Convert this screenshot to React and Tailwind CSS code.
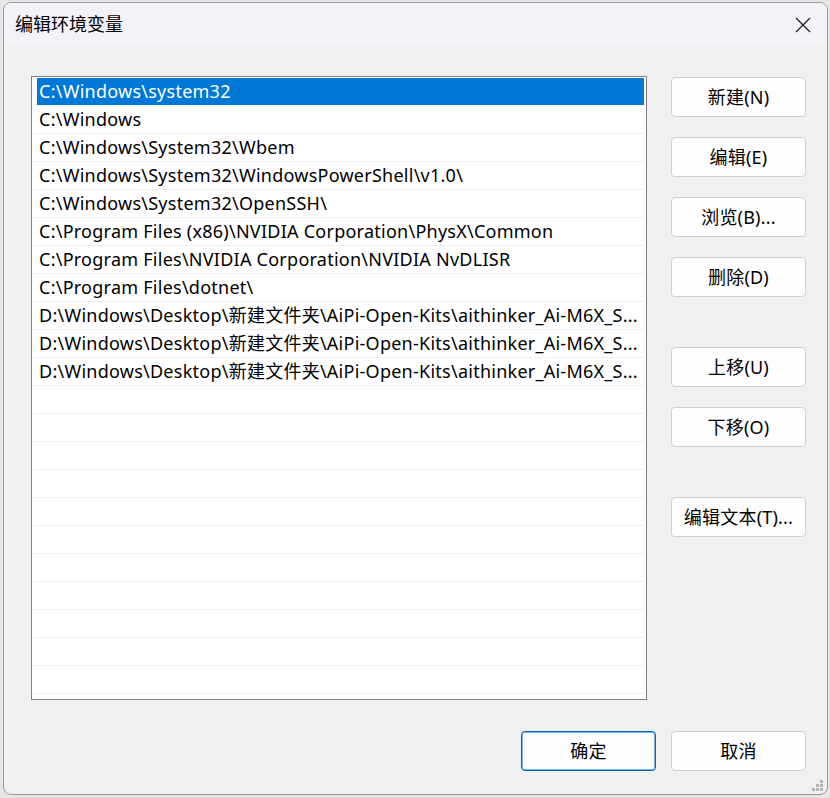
import React from "react";

const FONT = { fontFamily: '"Noto Sans", "Noto Sans CJK SC", sans-serif' };

const rows = [
  "C:\\Windows\\system32",
  "C:\\Windows",
  "C:\\Windows\\System32\\Wbem",
  "C:\\Windows\\System32\\WindowsPowerShell\\v1.0\\",
  "C:\\Windows\\System32\\OpenSSH\\",
  "C:\\Program Files (x86)\\NVIDIA Corporation\\PhysX\\Common",
  "C:\\Program Files\\NVIDIA Corporation\\NVIDIA NvDLISR",
  "C:\\Program Files\\dotnet\\",
  "D:\\Windows\\Desktop\\新建文件夹\\AiPi-Open-Kits\\aithinker_Ai-M6X_S...",
  "D:\\Windows\\Desktop\\新建文件夹\\AiPi-Open-Kits\\aithinker_Ai-M6X_S...",
  "D:\\Windows\\Desktop\\新建文件夹\\AiPi-Open-Kits\\aithinker_Ai-M6X_S...",
];

function Btn({ children, primary, className = "" }) {
  return (
    <div
      className={
        "w-[135px] h-[40px] rounded-[4px] bg-[#fdfdfd] flex items-center justify-center text-[18px] tracking-[0.2px] text-black " +
        (primary ? "border border-[#0067c0] shadow-[inset_0_0_0_0.5px_#0067c0] " : "border border-[#d0d0d0] ") +
        className
      }
    >
      {children}
    </div>
  );
}

export default function App() {
  const all = [...rows];
  while (all.length < 23) all.push("");
  return (
    <div className="w-[830px] h-[798px] bg-[#e6e6e6] pl-[3px] pt-[2px] overflow-hidden relative" style={FONT}>
      <div className="w-[825px] h-[793px] rounded-[8px] border border-[#9c9c9c] bg-[#f0f0f0] overflow-hidden flex flex-col relative">
        <div className="h-[43px] shrink-0 bg-[#f3f2f7] flex items-center justify-between pl-[11px] pr-[16px]">
          <span className="text-[18px] text-black">编辑环境变量</span>
          <svg width="16" height="16" viewBox="0 0 16 16">
            <path d="M1 1 L15 15 M15 1 L1 15" stroke="#1a1a1a" strokeWidth="1.2" fill="none" />
          </svg>
        </div>
        <div className="flex-1 flex flex-col pl-[27px] pt-[30px]">
          <div className="flex gap-[24px]">
            <div className="w-[616px] h-[624px] border border-[#7f7f87] bg-white pl-[1px] pt-[1px] overflow-hidden">
              {all.map((r, i) =>
                i === 0 ? (
                  <div key={i} className="w-[611px] h-[28px] flex">
                    <div className="ml-[4px] flex-1 h-[27px] bg-[#0078d7] text-white text-[18px] tracking-[0.25px] flex items-center pl-[2px] whitespace-nowrap overflow-hidden">
                      {r}
                    </div>
                  </div>
                ) : (
                  <div
                    key={i}
                    className="w-[611px] h-[28px] border-b border-[#efefef] flex items-center pl-[6px] text-[18px] tracking-[0.25px] text-black whitespace-nowrap overflow-hidden"
                  >
                    {r}
                  </div>
                )
              )}
            </div>
            <div className="flex flex-col pt-[1px]">
              <Btn>新建(N)</Btn>
              <Btn className="mt-[20px]">编辑(E)</Btn>
              <Btn className="mt-[20px]">浏览(B)...</Btn>
              <Btn className="mt-[20px]">删除(D)</Btn>
              <Btn className="mt-[50px]">上移(U)</Btn>
              <Btn className="mt-[20px]">下移(O)</Btn>
              <Btn className="mt-[50px]">编辑文本(T)...</Btn>
            </div>
          </div>
          <div className="flex justify-end gap-[15px] pr-[21px] mt-[31px]">
            <Btn primary>确定</Btn>
            <Btn>取消</Btn>
          </div>
        </div>
        <svg width="14" height="14" viewBox="0 0 14 14" className="absolute right-[2px] bottom-[1px]">
          <g fill="#b4b4b4">
            <rect x="9" y="1" width="3" height="3" />
            <rect x="5" y="5" width="3" height="3" />
            <rect x="9" y="5" width="3" height="3" />
            <rect x="1" y="9" width="3" height="3" />
            <rect x="5" y="9" width="3" height="3" />
            <rect x="9" y="9" width="3" height="3" />
          </g>
        </svg>
      </div>
    </div>
  );
}
